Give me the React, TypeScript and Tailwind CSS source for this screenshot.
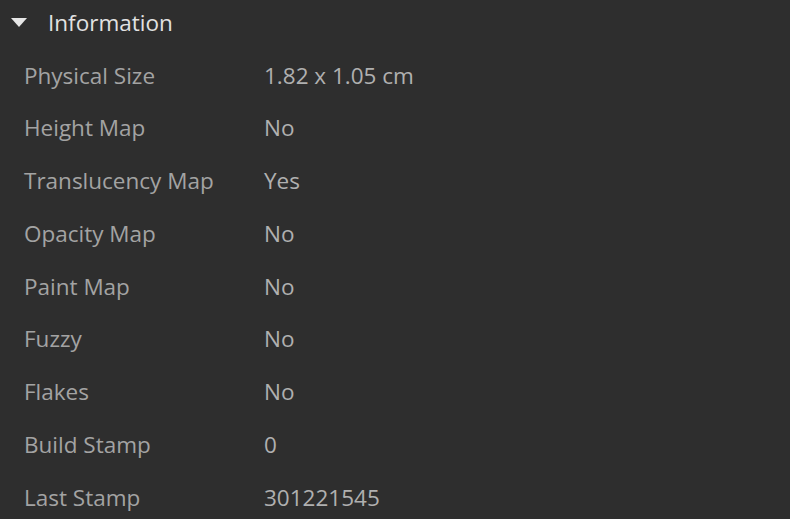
const rows: [string, string][] = [
  ['Physical Size', '1.82 x 1.05 cm'],
  ['Height Map', 'No'],
  ['Translucency Map', 'Yes'],
  ['Opacity Map', 'No'],
  ['Paint Map', 'No'],
  ['Fuzzy', 'No'],
  ['Flakes', 'No'],
  ['Build Stamp', '0'],
  ['Last Stamp', '301221545'],
];

export default function App() {
  return (
    <div className="h-[519px] w-[790px] overflow-hidden bg-[#2e2e2e] font-['Open_Sans',sans-serif]">
      <div className="flex h-[45px] items-center">
        <svg width="16" height="10" viewBox="0 0 16 10" className="ml-[11px] mt-[1px]">
          <path d="M0 0 L16 0 L8 9 Z" fill="#e6e6e6" />
        </svg>
        <span className="ml-[21px] text-[22.5px] text-[#e2e2e2]">Information</span>
      </div>
      <div className="mt-[4px]">
        {rows.map(([label, value]) => (
          <div key={label} className="flex h-[52.75px] items-center text-[22.5px] text-[#a3a3a3]">
            <span className="w-[264px] pl-[24px]">{label}</span>
            <span className="text-[#b0b0b0]">{value}</span>
          </div>
        ))}
      </div>
    </div>
  );
}
